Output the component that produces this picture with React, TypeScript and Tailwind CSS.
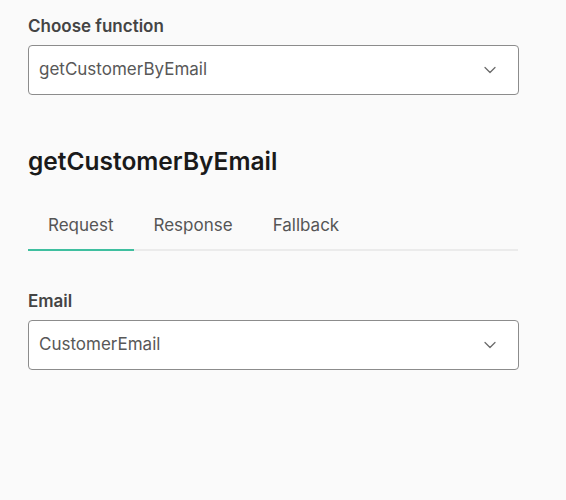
import { ChevronDown } from "lucide-react";

const SelectBox = ({ value }: { value: string }) => (
  <div className="flex h-[50px] w-[491px] items-center justify-between rounded-[4px] border border-[#8c8c8c] bg-white pl-[10px] pr-[18px]">
    <span className="text-[17px] text-[#585858]">{value}</span>
    <ChevronDown className="h-[20px] w-[20px] text-[#6b6b6b]" strokeWidth={1.5} />
  </div>
);

const App = () => {
  const tabs = ["Request", "Response", "Fallback"];

  return (
    <div
      className="min-h-[500px] bg-[#fafafa] pl-[28px] pt-[14px]"
      style={{ fontFamily: "Inter, 'Noto Sans', sans-serif" }}
    >
      <div className="mb-[7px] text-[17px] leading-[24px] font-semibold text-[#444]">Choose function</div>
      <SelectBox value="getCustomerByEmail" />

      <h2 className="mt-[50px] text-[24.5px] leading-[32px] font-semibold text-[#1a1a1a]">getCustomerByEmail</h2>

      <div className="mt-[36px] flex w-[490px] border-b-2 border-[#ebebeb]">
        {tabs.map((t, i) => (
          <div
            key={t}
            className={`-mb-[2px] px-[20px] pb-[12px] text-[17px] leading-[24px] text-[#555] ${
              i === 0 ? "border-b-2 border-[#3fbf9f]" : ""
            }`}
          >
            {t}
          </div>
        ))}
      </div>

      <div className="mb-[7px] mt-[38px] text-[17px] leading-[24px] font-semibold text-[#444]">Email</div>
      <SelectBox value="CustomerEmail" />
    </div>
  );
};

export default App;
